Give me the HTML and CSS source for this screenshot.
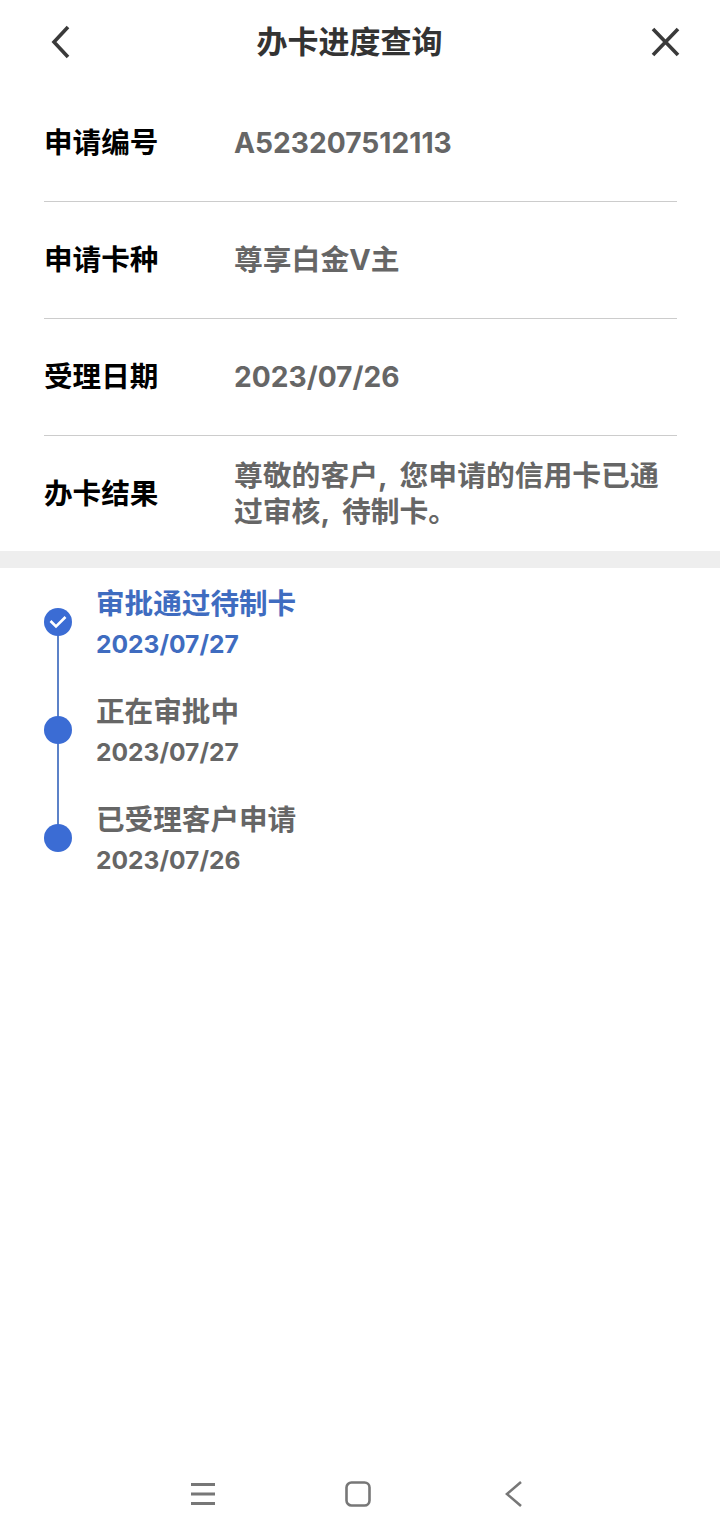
FILE: index.html
```html
<!DOCTYPE html>
<html lang="zh">
<head>
    <meta charset="UTF-8">
    <meta name="viewport" content="width=device-width, initial-scale=1.0">
    <title>办卡进度查询</title>
    <link rel="stylesheet" href="styles.css">
</head>
<body>
<div class="page">
    <header class="topbar">
        <svg class="icon-back" width="24" height="36" viewBox="0 0 24 36"><path d="M20 3 L6 18 L20 33" fill="none" stroke="#3a3a3a" stroke-width="3.6"/></svg>
        <h1>办卡进度查询</h1>
        <svg class="icon-close" width="32" height="32" viewBox="0 0 32 32"><path d="M4 3 L29 29 M29 3 L4 29" fill="none" stroke="#3a3a3a" stroke-width="3.6"/></svg>
    </header>

    <section class="info">
        <div class="row">
            <div class="label">申请编号</div>
            <div class="value">A523207512113</div>
        </div>
        <div class="row">
            <div class="label">申请卡种</div>
            <div class="value cjk">尊享白金V主</div>
        </div>
        <div class="row">
            <div class="label">受理日期</div>
            <div class="value">2023/07/26</div>
        </div>
        <div class="row">
            <div class="label">办卡结果</div>
            <div class="value multi">尊敬的客户, 您申请的信用卡已通过审核, 待制卡。</div>
        </div>
    </section>

    <div class="band"></div>

    <ul class="timeline">
        <li class="step active">
            <div class="marker">
                <span class="dot">
                    <svg width="20" height="16" viewBox="0 0 20 16"><path d="M2.5 7 L8 12.5 L17.5 3" fill="none" stroke="#fff" stroke-width="2.6"/></svg>
                </span>
            </div>
            <div class="step-text">
                <div class="step-title">审批通过待制卡</div>
                <div class="step-date">2023/07/27</div>
            </div>
        </li>
        <li class="step">
            <div class="marker"><span class="dot"></span></div>
            <div class="step-text">
                <div class="step-title">正在审批中</div>
                <div class="step-date">2023/07/27</div>
            </div>
        </li>
        <li class="step last">
            <div class="marker"><span class="dot"></span></div>
            <div class="step-text">
                <div class="step-title">已受理客户申请</div>
                <div class="step-date">2023/07/26</div>
            </div>
        </li>
    </ul>

    <nav class="navbar">
        <svg class="nav-menu" width="26" height="24" viewBox="0 0 26 24"><path d="M1 2.5 H25 M1 12 H25 M1 21.5 H25" fill="none" stroke="#777" stroke-width="2.8"/></svg>
        <svg class="nav-home" width="26" height="26" viewBox="0 0 26 26"><rect x="1.5" y="1.5" width="23" height="23" rx="5" fill="none" stroke="#777" stroke-width="2.6"/></svg>
        <svg class="nav-back" width="18" height="28" viewBox="0 0 18 28"><path d="M16 2 L2 14 L16 26" fill="none" stroke="#777" stroke-width="2.6"/></svg>
    </nav>
</div>
</body>
</html>
```

FILE: styles.css
```css
* {
    box-sizing: border-box;
}
html, body {
    margin: 0;
    padding: 0;
    background: #fff;
}
body {
    font-family: Inter, "Noto Sans CJK SC", sans-serif;
}
.page {
    width: 720px;
    height: 1536px;
    display: flex;
    flex-direction: column;
}
.topbar {
    height: 85px;
    display: flex;
    align-items: center;
    justify-content: space-between;
    padding: 0 39px 2px 48px;
}
.topbar h1 {
    margin: 0 22px 0 0;
    font-size: 31px;
    font-weight: 700;
    color: #333;
    line-height: 83px;
}
.info {
    padding: 0 43px 0 44px;
}
.row {
    height: 117px;
    display: flex;
    align-items: center;
    border-bottom: 1px solid #ccc;
}
.row:last-child {
    border-bottom: none;
    height: 115px;
}
.label {
    width: 190px;
    flex-shrink: 0;
    margin-bottom: 5px;
    font-size: 28.6px;
    font-weight: 700;
    color: #000;
}
.value {
    margin-bottom: 1px;
    font-size: 28.2px;
    font-weight: 700;
    color: #666;
}
.value.cjk {
    margin-bottom: 6px;
    font-size: 28.8px;
}
.value.multi {
    margin: 1px 0 0;
    font-size: 28.8px;
    line-height: 36px;
    word-spacing: 6px;
}
.band {
    height: 17px;
    background: #eee;
}
.timeline {
    list-style: none;
    margin: 0;
    padding: 18px 0 0 44px;
}
.step {
    height: 108px;
    display: flex;
}
.marker {
    width: 28px;
    margin-right: 24px;
    position: relative;
    padding-top: 22px;
}
.marker::after {
    content: "";
    position: absolute;
    left: 13px;
    top: 36px;
    width: 2px;
    height: 108px;
    background: #5c82c8;
}
.last .marker::after {
    display: none;
}
.dot {
    position: relative;
    z-index: 1;
    width: 28px;
    height: 28px;
    border-radius: 50%;
    background: #3b6cd4;
    display: flex;
    align-items: center;
    justify-content: center;
}
.step-title {
    font-size: 28.6px;
    font-weight: 700;
    line-height: 36px;
    color: #666;
}
.step-date {
    font-size: 24.6px;
    font-weight: 700;
    line-height: 36px;
    margin-top: 4px;
    color: #666;
}
.active .step-title, .active .step-date {
    color: #3f6cc0;
}
.navbar {
    margin-top: auto;
    height: 84px;
    display: flex;
    align-items: center;
    padding-left: 190px;
}
.nav-home {
    margin-left: 129px;
}
.nav-back {
    margin-left: 134px;
}
```
